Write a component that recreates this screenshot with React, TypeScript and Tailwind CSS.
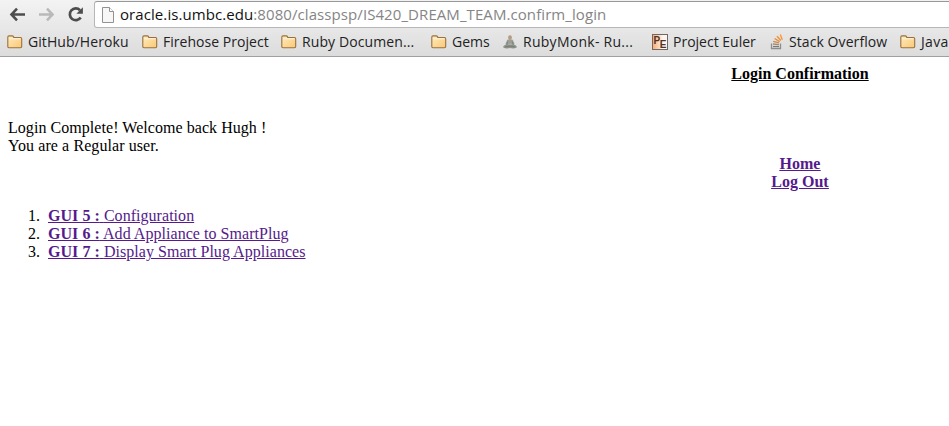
import type { ReactNode } from "react";

function FolderIcon() {
  return (
    <svg width="16" height="14" viewBox="0 0 16 14" className="block">
      <defs>
        <linearGradient id="folder" x1="0" y1="0" x2="1" y2="1">
          <stop offset="0" stopColor="#ffebbd" />
          <stop offset="1" stopColor="#fac875" />
        </linearGradient>
      </defs>
      <path d="M.8 11.5V2.2Q.8.9 2 .9h3.2q1 0 1.3.9l.3.7h6.7q1.200 0 1.200 1.200v7.800q0 1.200-1.200 1.200H2Q.8 12.700.8 11.500Z" fill="url(#folder)" stroke="#99703e" strokeWidth="1.1" />
      <path d="M2 3.800h11.500" stroke="#fff5dc" strokeWidth="1" />
    </svg>
  );
}

function MonkIcon() {
  return (
    <svg width="14" height="14" viewBox="0 0 14 14" className="block">
      <path d="M4.200 4.800Q7 3.500 9.800 4.800L11.500 9l-1.500 1.500H4L2.500 9Z" fill="#9a9f98" />
      <path d="M.3 11.200q2-2.700 6.700-1.200 4.700-1.500 6.700 1.200v1.300q-3 1.500-6.700.5-3.700 1-6.700-.5Z" fill="#8e938c" />
      <path d="M4.700 6.500 3.700 9.500M9.300 6.500l1 3M2 12l5-1 5 1" stroke="#6d756f" strokeWidth=".7" fill="none" />
      <path d="M5.300 8.600h3.400v1.400H5.300Z" fill="#b9aa9a" />
      <ellipse cx="7" cy="2.500" rx="1.900" ry="2.300" fill="#b59a84" />
    </svg>
  );
}

function EulerIcon() {
  return (
    <svg width="16" height="16" viewBox="0 0 16 16" className="block">
      <defs>
        <linearGradient id="euler">
          <stop offset="0" stopColor="#ffa868" />
          <stop offset=".7" stopColor="#fff5ee" />
        </linearGradient>
      </defs>
      <rect x=".5" y=".5" width="15" height="15" fill="url(#euler)" stroke="#6e6967" />
      <text x="1.500" y="10" fontSize="10" fontWeight="bold" fill="#4f332b" className="font-['Liberation_Sans',sans-serif]">P</text>
      <text x="7.700" y="13.500" fontSize="10" fontWeight="bold" fill="#4f332b" className="font-['Liberation_Sans',sans-serif]">E</text>
    </svg>
  );
}

function StackIcon() {
  return (
    <svg width="14" height="16" viewBox="0 0 14 16" className="block" fill="none">
      <path d="M1.500 9.500v5h9v-5" stroke="#8b8d8f" strokeWidth="1.300" />
      <path d="M3 12.500h6" stroke="#777" strokeWidth="1.200" />
      <path d="m3 10 6 .6" stroke="#a68b6a" strokeWidth="1.300" />
      <path d="m3.200 7.300 5.900 1.600" stroke="#cd8a4b" strokeWidth="1.300" />
      <path d="m4.600 4.500 5.100 3.100" stroke="#e58b3c" strokeWidth="1.300" />
      <path d="m7 2.200 3.900 4.300" stroke="#f48b2c" strokeWidth="1.300" />
      <path d="m10.300.5 2 5.300" stroke="#ff912c" strokeWidth="1.300" />
    </svg>
  );
}

interface BookmarkProps {
  icon: ReactNode;
  label: string;
  slot: string;
  text: string;
}

function Bookmark({ icon, label, slot, text }: BookmarkProps) {
  return (
    <div className={`flex h-full shrink-0 items-center ${slot}`}>
      {icon}
      <span className={`whitespace-nowrap ${text}`}>{label}</span>
    </div>
  );
}

const bookmarks: BookmarkProps[] = [
  { icon: <FolderIcon />, label: "GitHub/Heroku", slot: "w-[135px]", text: "ml-[5px] tracking-[0.08px]" },
  { icon: <FolderIcon />, label: "Firehose Project", slot: "w-[139px]", text: "ml-[5px] tracking-[0.03px]" },
  { icon: <FolderIcon />, label: "Ruby Documen...", slot: "w-[150px]", text: "ml-[5px] tracking-[0.1px]" },
  { icon: <FolderIcon />, label: "Gems", slot: "w-[72px]", text: "ml-[5px]" },
  { icon: <MonkIcon />, label: "RubyMonk- Ru...", slot: "w-[149px]", text: "ml-[6px] tracking-[0.27px]" },
  { icon: <EulerIcon />, label: "Project Euler", slot: "w-[118px]", text: "ml-[5px]" },
  { icon: <StackIcon />, label: "Stack Overflow", slot: "w-[130px]", text: "ml-[5px] tracking-[0.08px]" },
  { icon: <FolderIcon />, label: "Java", slot: "w-[60px]", text: "ml-[5px] tracking-[0.3px]" },
];

function BrowserBar() {
  return (
    <header className="h-[57px] overflow-hidden border-b border-[#a0a0a0] bg-linear-to-b from-[#f3f3f3] to-[#dcdcdc] font-['Open_Sans','Noto_Sans',sans-serif] text-[#222]">
      <div className="flex h-7 items-start">
        <svg width="94" height="28" viewBox="0 0 94 28" fill="none" className="shrink-0">
          <path d="M25 14.500H11.500m5.500-5.800-5.500 5.800 5.500 5.800" stroke="#4d4d4d" strokeWidth="2.600" />
          <path d="M39 14.500h13.500M47 8.700l5.500 5.800-5.500 5.800" stroke="#b9b9b9" strokeWidth="2.600" />
          <path d="M80 10.200a5.900 5.900 0 1 0 .7 7.300" stroke="#4d4d4d" strokeWidth="2.700" />
          <path d="M82.900 7.300v6.500h-6.500Z" fill="#4d4d4d" />
        </svg>
        <div className="mt-px flex h-[27px] w-[900px] shrink-0 items-center rounded-l-[3px] border border-[#b6b6b6] border-t-[#989898] bg-white">
          <svg width="12" height="16" viewBox="0 0 12 16" className="ml-[7px] shrink-0" fill="#f7f7f7" stroke="#929292">
            <path d="M.5.500h7l4 4v11H.500Z" />
            <path d="M7.500.500v4h4" fill="white" />
          </svg>
          <div className="mb-0.5 ml-[6px] whitespace-nowrap text-[15px] leading-5 tracking-[0.08px] text-[#858585]">
            <span className="text-[#111]">oracle.is.umbc.edu</span>:8080/classpsp/IS420_DREAM_TEAM.confirm_login
          </div>
        </div>
      </div>
      <nav className="flex h-7 items-center pl-[7px] text-[14px] leading-5">
        {bookmarks.map((b) => (
          <Bookmark key={b.label} {...b} />
        ))}
      </nav>
    </header>
  );
}

const pages = [
  { code: "GUI 5 :", title: "Configuration" },
  { code: "GUI 6 :", title: "Add Appliance to SmartPlug" },
  { code: "GUI 7 :", title: "Display Smart Plug Appliances" },
];

export default function App() {
  return (
    <div className="h-[426px] w-[949px] overflow-hidden bg-white">
      <BrowserBar />
      <main className="w-[1600px] p-2 font-['Liberation_Serif',serif] text-[16px] leading-[18px] text-black">
        <h1 className="text-center font-bold underline">Login Confirmation</h1>
        <p className="mt-9 tracking-[0.05px]">Login Complete! Welcome back Hugh !</p>
        <p className="tracking-[0.08px]">You are a Regular user.</p>
        <div className="flex flex-col items-center font-bold text-[#551a8b] underline">
          <a href="#home">Home</a>
          <a href="#logout">Log Out</a>
        </div>
        <ol className="mt-4">
          {pages.map((p, i) => (
            <li key={p.code} className="flex">
              <span className="w-8 shrink-0 text-right">{i + 1}.</span>
              <a href="#page" className="ml-2 tracking-[0.04px] text-[#551a8b] underline">
                <b>{p.code}</b> {p.title}
              </a>
            </li>
          ))}
        </ol>
      </main>
    </div>
  );
}
